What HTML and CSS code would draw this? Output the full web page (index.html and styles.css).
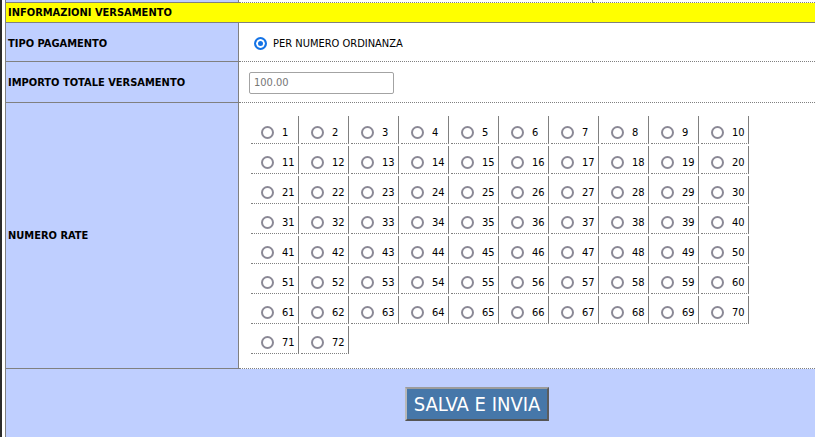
FILE: index.html
```html
<!DOCTYPE html>
<html lang="it">
<head>
<meta charset="utf-8">
<title>Informazioni versamento</title>
<link rel="stylesheet" href="styles.css">
</head>
<body>
<div class="page">
  <div class="form">
    <div class="row prev">
      <div class="lab"></div>
      <div class="val split"><div class="part"></div><div class="part last"></div></div>
    </div>
    <div class="head">INFORMAZIONI VERSAMENTO</div>
    <div class="row r-tipo">
      <div class="lab">TIPO PAGAMENTO</div>
      <div class="val">
        <label class="opt"><span class="radio checked"></span>PER NUMERO ORDINANZA</label>
      </div>
    </div>
    <div class="row r-imp">
      <div class="lab">IMPORTO TOTALE VERSAMENTO</div>
      <div class="val">
        <input class="field" type="text" value="100.00" readonly>
      </div>
    </div>
    <div class="row r-rate">
      <div class="lab">NUMERO RATE</div>
      <div class="val top">
        <div class="grid" id="grid"></div>
      </div>
    </div>
    <div class="foot">
      <button class="btn" type="button">SALVA E INVIA</button>
    </div>
  </div>
</div>
<script>
  var g = document.getElementById('grid');
  var html = '';
  for (var i = 1; i <= 72; i++) {
    html += '<label class="cell"><span class="radio"></span><span class="num">' + i + '</span></label>';
  }
  g.innerHTML = html;
</script>
</body>
</html>
```

FILE: styles.css
```css
html, body {
  margin: 0;
  padding: 0;
  background: #ffffff;
}

body {
  font-family: "DejaVu Sans Condensed", "DejaVu Sans", sans-serif;
  font-stretch: condensed;
  font-size: 11px;
  color: #000;
}

.page {
  border-left: 2px solid #2b2b2b;
  padding-left: 3px;
  height: 437px;
  box-sizing: border-box;
}

.form {
  border-left: 1px solid #808080;
  height: 100%;
  display: flex;
  flex-direction: column;
}

.row {
  display: grid;
  grid-template-columns: 233px minmax(0, 1fr);
}

.lab {
  background: #bfcfff;
  border-right: 1px solid #808080;
  border-bottom: 1px solid #808080;
  box-sizing: border-box;
  font-weight: bold;
  padding-left: 2px;
  display: flex;
  align-items: center;
}

.val {
  border-bottom: 1px dotted #808080;
  box-sizing: border-box;
  padding-left: 10px;
  display: flex;
  align-items: center;
  min-width: 0;
}

.prev { height: 3px; }
.prev .val { padding-left: 0; border-bottom: none; }
.split .part {
  width: 354px;
  height: 3px;
  box-sizing: border-box;
  border-right: 1px solid #808080;
  border-bottom: 1px dotted #808080;
}
.split .part.last {
  flex: 1;
  border-right: none;
}

.head {
  background: #ffff00;
  height: 20px;
  box-sizing: border-box;
  border-bottom: 1px solid #808080;
  font-weight: bold;
  padding-left: 2px;
  line-height: 19px;
}

.r-tipo { height: 39px; }
.r-imp { height: 41px; }
.r-rate { height: 266px; }

.r-tipo .lab { padding-top: 3px; }

.opt {
  display: flex;
  align-items: center;
  padding-top: 3px;
}

.radio {
  display: inline-block;
  width: 13px;
  height: 13px;
  box-sizing: border-box;
  border-radius: 50%;
  border: 2px solid #8b8996;
  background: #fff;
  flex: none;
}

.opt .radio {
  margin: 0 6px 0 5px;
}

.radio.checked {
  border-color: #1473e6;
  background: #1473e6;
  box-shadow: inset 0 0 0 2px #fff;
}

.field {
  width: 145px;
  height: 22px;
  box-sizing: border-box;
  border: 1px solid #a3a3a3;
  border-radius: 2px;
  padding: 0 4px;
  font: inherit;
  font-stretch: condensed;
  color: #767676;
  background: #fff;
  margin-top: 1px;
}

.val.top {
  align-items: flex-start;
  padding-top: 11px;
}

.grid {
  display: grid;
  grid-template-columns: repeat(10, 48px);
  grid-auto-rows: 28px;
  gap: 2px;
  padding: 2px;
}

.cell {
  display: flex;
  align-items: center;
  box-sizing: border-box;
  border-right: 1px solid #808080;
  border-bottom: 1px dotted #808080;
  padding: 6px 0 0 10px;
}

.cell .num {
  margin-left: 8px;
}

.foot {
  flex: 1;
  background: #bfcfff;
  padding-top: 18px;
  display: flex;
  justify-content: flex-start;
}

.btn {
  margin-left: 399px;
  width: 144px;
  height: 34px;
  box-sizing: border-box;
  background: #4677a9;
  color: #fff;
  font-family: "DejaVu Sans Condensed", "DejaVu Sans", sans-serif;
  font-stretch: condensed;
  font-size: 20px;
  padding: 0;
  border: 2px solid;
  border-color: #9c9c9c #5c5c5c #555555 #b8b8b8;
  cursor: pointer;
}
```
